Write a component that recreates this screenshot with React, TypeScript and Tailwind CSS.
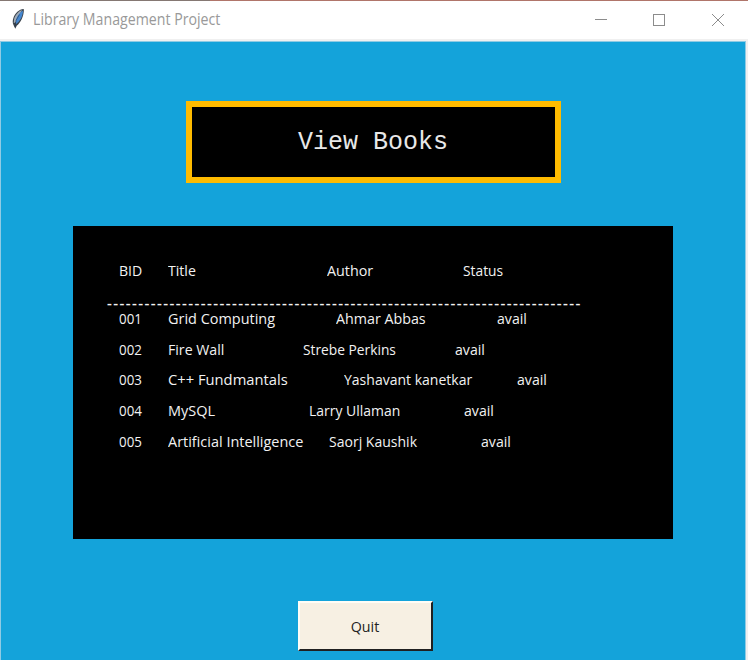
const rows = [
  { id: '001', title: 'Grid Computing', author: 'Ahmar Abbas', status: 'avail', titleBox: 'w-[168px]', titleFit: 'scale-x-[0.963]', authorBox: 'w-[161px]', authorFit: 'scale-x-[0.951]', h: 'h-[31px]' },
  { id: '002', title: 'Fire Wall', author: 'Strebe Perkins', status: 'avail', titleBox: 'w-[135px]', titleFit: 'scale-x-[0.942]', authorBox: 'w-[152px]', authorFit: 'scale-x-[0.918]', h: 'h-[30px]' },
  { id: '003', title: 'C++ Fundmantals', author: 'Yashavant kanetkar', status: 'avail', titleBox: 'w-[176px]', titleFit: 'scale-x-[0.982]', authorBox: 'w-[173px]', authorFit: 'scale-x-[0.934]', h: 'h-[31px]' },
  { id: '004', title: 'MySQL', author: 'Larry Ullaman', status: 'avail', titleBox: 'w-[141px]', titleFit: 'scale-x-[0.965]', authorBox: 'w-[155px]', authorFit: 'scale-x-[0.930]', h: 'h-[31px]' },
  { id: '005', title: 'Artificial Intelligence', author: 'Saorj Kaushik', status: 'avail', titleBox: 'w-[161px]', titleFit: 'scale-x-[0.964]', authorBox: 'w-[152px]', authorFit: 'scale-x-[0.935]', h: 'h-[31px]' },
];

function Cell({ text, box, fit = 'scale-x-[0.940]' }: { text: string; box: string; fit?: string }) {
  return (
    <div className={`shrink-0 whitespace-pre ${box}`}>
      <span className={`inline-block origin-left ${fit}`}>{text}</span>
    </div>
  );
}

function Feather() {
  return (
    <svg className="-mt-[2px] ml-[11px] h-[22px] w-[14px]" viewBox="0 0 14 22">
      <path d="M12.4 1C8.5 1.2 3.6 5.2 2.3 10.2C1.5 12.5 1.5 15 2.5 17L4.3 20.8L5.7 17.8C9.8 14.7 12.8 8.5 12.9 1.6Z" fill="#3b434c" />
      <path d="M11 2C7.6 3.2 4.2 7 3.1 11L2.7 15.3L5 14Z" fill="#a3acb6" />
      <path d="M12 2.4C12 8 9 13.2 4.8 16.2L5 11.5C6 8 8.5 4.5 12 2.4Z" fill="#4587d0" />
      <path d="M8.5 6.5L5 12.5L4.1 19" fill="none" stroke="#26384e" strokeWidth=".6" />
    </svg>
  );
}

export default function App() {
  return (
    <div className="flex h-[660px] w-[748px] flex-col overflow-hidden bg-[#f0f0f0] font-['Open_Sans','Noto_Sans',sans-serif]">
      <div className="flex h-px shrink-0">
        <div className="w-[210px] bg-[#857873]" />
        <div className="flex-1 bg-[#b0756a]" />
      </div>
      <header className="flex h-[38px] shrink-0 items-center bg-white text-[#999]">
        <Feather />
        <span className="ml-2 w-[560px] whitespace-nowrap text-[15.5px]">
          <span className="inline-block origin-left scale-x-[0.914]">Library Management Project</span>
        </span>
        <svg className="-ml-px -mt-[2px] h-[14px] w-[134px] shrink-0" viewBox="0 0 134 14" fill="none" stroke="#8c8c8c" shapeRendering="crispEdges">
          <path d="M3 7.5H15M61.5 2.5H72.5V13.5H61.5Z" />
          <path d="M120 2L132 14M132 2L120 14" shapeRendering="auto" />
        </svg>
      </header>
      <main className="mr-[2px] mt-[2px] flex flex-1 flex-col items-center border-x border-t border-[#8fcbe4] bg-[#14a3da]">
        <div className="mt-[59px] flex h-[82px] w-[375px] shrink-0 items-center justify-center border-[6px] border-[#ffbb00] bg-black pt-px text-[#e8e8e8]">
          <h1 className="font-['Liberation_Mono',monospace] text-[25px] leading-none">View Books</h1>
        </div>
        <section className="mt-[43px] h-[313px] w-[600px] shrink-0 bg-black pt-[29px] text-[15px] leading-[31px] text-[#f2f2f2]">
          <div className="flex h-[39px] pl-[46px]">
            <Cell text="BID" box="w-[49px]" />
            <Cell text="Title" box="w-[159px]" />
            <Cell text="Author" box="w-[136px]" fit="scale-x-[0.955]" />
            <Cell text="Status" box="w-[60px]" fit="scale-x-[0.920]" />
          </div>
          <div className="h-[9px] whitespace-nowrap pl-[34px] font-semibold leading-[16px] tracking-[1.42px]">{'-'.repeat(76)}</div>
          {rows.map((row) => (
            <div key={row.id} className={`flex pl-[46px] ${row.h}`}>
              <Cell text={row.id} box="w-[49px]" fit="scale-x-[0.890]" />
              <Cell text={row.title} box={row.titleBox} fit={row.titleFit} />
              <Cell text={row.author} box={row.authorBox} fit={row.authorFit} />
              <Cell text={row.status} box="w-[50px]" />
            </div>
          ))}
        </section>
        <button className="ml-[-15px] mt-[62px] h-[50px] w-[135px] shrink-0 border-2 border-b-[#202020] border-l-[#fffdf6] border-r-[#202020] border-t-[#fffdf6] bg-[#f7f0e3] pr-[2px] text-[15px] text-[#222]">
          <span className="inline-block scale-x-[0.95]">Quit</span>
        </button>
      </main>
    </div>
  );
}
